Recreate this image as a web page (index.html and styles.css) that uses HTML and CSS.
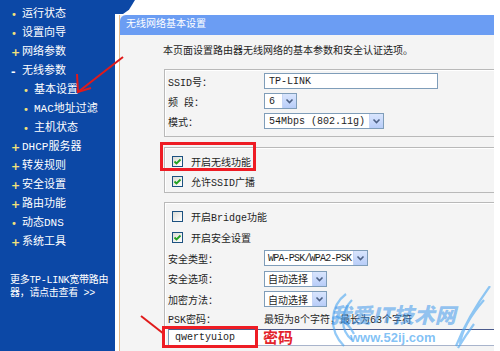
FILE: index.html
```html
<!DOCTYPE html>
<html lang="zh-CN">
<head>
<meta charset="utf-8">
<title>无线网络基本设置</title>
<link rel="stylesheet" href="styles.css">
</head>
<body>
<div class="page">
  <nav class="side">
    <ul class="menu">
      <li class="dot">运行状态</li>
      <li class="dot">设置向导</li>
      <li class="plus">网络参数</li>
      <li class="minus">无线参数</li>
      <li class="dot sub">基本设置</li>
      <li class="dot sub">MAC地址过滤</li>
      <li class="dot sub">主机状态</li>
      <li class="plus">DHCP服务器</li>
      <li class="plus">转发规则</li>
      <li class="plus">安全设置</li>
      <li class="plus">路由功能</li>
      <li class="dot">动态DNS</li>
      <li class="plus">系统工具</li>
    </ul>
    <p class="more">更多TP-LINK宽带路由<br>器，请点击查看 &gt;&gt;</p>
  </nav>
  <main class="main">
    <section class="panel">
      <h1 class="panel-title">无线网络基本设置</h1>
      <div class="panel-body">
        <p class="desc">本页面设置路由器无线网络的基本参数和安全认证选项。</p>

        <div class="group g1">
          <div class="row"><span class="lbl">SSID号：</span><span class="field ssid">TP-LINK</span></div>
          <div class="row"><span class="lbl">频&nbsp;段：</span><span class="field sel w-band"><span class="val">6</span><span class="btn"><svg viewBox="0 0 13 14" width="13" height="14"><path d="M3.5 5.5 L6.5 8.5 L9.5 5.5" fill="none" stroke="#4d6185" stroke-width="1.6"/></svg></span></span></div>
          <div class="row"><span class="lbl">模式：</span><span class="field sel w-mode"><span class="val">54Mbps (802.11g)</span><span class="btn"><svg viewBox="0 0 13 14" width="13" height="14"><path d="M3.5 5.5 L6.5 8.5 L9.5 5.5" fill="none" stroke="#4d6185" stroke-width="1.6"/></svg></span></span></div>
        </div>

        <div class="group g2">
          <div class="row chk"><span class="cb on"><svg viewBox="0 0 11 11" width="11" height="11"><path d="M2.5 5.5 L4.5 7.5 L8.5 3.5" fill="none" stroke="#21a121" stroke-width="1.8"/></svg></span>开启无线功能</div>
          <div class="row chk"><span class="cb on"><svg viewBox="0 0 11 11" width="11" height="11"><path d="M2.5 5.5 L4.5 7.5 L8.5 3.5" fill="none" stroke="#21a121" stroke-width="1.8"/></svg></span>允许SSID广播</div>
        </div>

        <div class="group g3">
          <div class="row chk r-bridge"><span class="cb"></span>开启Bridge功能</div>
          <div class="row chk r-sec"><span class="cb on"><svg viewBox="0 0 11 11" width="11" height="11"><path d="M2.5 5.5 L4.5 7.5 L8.5 3.5" fill="none" stroke="#21a121" stroke-width="1.8"/></svg></span>开启安全设置</div>
          <div class="row"><span class="lbl">安全类型：</span><span class="field sel w-type"><span class="val tight">WPA-PSK/WPA2-PSK</span><span class="btn"><svg viewBox="0 0 13 14" width="13" height="14"><path d="M3.5 5.5 L6.5 8.5 L9.5 5.5" fill="none" stroke="#4d6185" stroke-width="1.6"/></svg></span></span></div>
          <div class="row r-opt"><span class="lbl">安全选项：</span><span class="field sel w-auto"><span class="val cjk">自动选择</span><span class="btn"><svg viewBox="0 0 13 14" width="13" height="14"><path d="M3.5 5.5 L6.5 8.5 L9.5 5.5" fill="none" stroke="#4d6185" stroke-width="1.6"/></svg></span></span></div>
          <div class="row"><span class="lbl">加密方法：</span><span class="field sel w-auto"><span class="val cjk">自动选择</span><span class="btn"><svg viewBox="0 0 13 14" width="13" height="14"><path d="M3.5 5.5 L6.5 8.5 L9.5 5.5" fill="none" stroke="#4d6185" stroke-width="1.6"/></svg></span></span></div>
          <div class="row r-psk"><span class="lbl">PSK密码：</span><span class="hint">最短为8个字符，最长为63个字符</span></div>
          <div class="pwd">qwertyuiop</div>
        </div>
      </div>
    </section>
  </main>

  <svg class="arrows" viewBox="0 0 500 351" width="500" height="351">
    <path d="M123 57 L78 92" stroke="#e01a1a" stroke-width="2" fill="none"/>
    <path d="M77 74 L78 92 L91 88" stroke="#e01a1a" stroke-width="2" fill="none"/>
    <path d="M141 316 L164 334" stroke="#e01a1a" stroke-width="2" fill="none"/>
  </svg>
  <div class="redbox rb1"></div>
  <div class="redbox rb2"></div>
  <div class="note">密码</div>

  <div class="mark">
    <svg class="wings" viewBox="0 0 170 70" width="170" height="70">
      <path d="M22 8 C6 20 4 44 20 60 M28 14 C16 26 16 44 28 54 M12 30 C20 34 26 40 30 48" stroke="#4aa6f2" stroke-width="2.2" fill="none"/>
      <path d="M166 0 C150 22 140 40 132 60 M160 14 C146 30 138 44 136 58 M150 38 C144 46 140 52 134 62" stroke="#4aa6f2" stroke-width="2.2" fill="none"/>
    </svg>
    <div class="mark-t">我爱IT技术网</div>
    <div class="mark-u">www.52ij.com</div>
  </div>
</div>
</body>
</html>
```

FILE: styles.css
```css
html, body {
  margin: 0;
  padding: 0;
}
body {
  width: 500px;
  height: 351px;
  overflow: hidden;
  background: #ffffff;
  font-family: "Liberation Mono", "Noto Sans CJK SC", monospace;
  color: #1e1e1e;
}
.page {
  position: relative;
  display: flex;
  width: 500px;
  height: 351px;
}

/* sidebar */
.side {
  position: relative;
  width: 115px;
  flex: none;
  background: #0c48a6;
  color: #ffffff;
  font-size: 11px;
}
.side::after {
  content: "";
  position: absolute;
  left: 115px;
  top: 0;
  width: 20px;
  height: 14px;
  background: #0c48a6;
  clip-path: polygon(0 0, 100% 0, 70% 70%, 40% 100%, 0 100%);
}
.menu {
  list-style: none;
  margin: 0;
  padding: 5px 0 0 0;
}
.menu li {
  display: flex;
  height: 19px;
  line-height: 19px;
  padding-left: 11px;
  white-space: nowrap;
}
.menu li::before {
  content: "•";
  width: 11px;
  flex: none;
  color: #f3e27a;
  font-family: "DejaVu Sans", sans-serif;
  font-size: 10px;
}
.menu li.plus::before {
  content: "+";
  font-weight: bold;
  font-size: 11px;
}
.menu li.minus::before {
  content: "-";
  color: #ffffff;
  font-weight: bold;
  font-size: 11px;
}
.menu li.sub {
  padding-left: 23px;
}
.more {
  margin: 22px 0 0 10px;
  line-height: 13px;
  font-size: 10px;
  white-space: nowrap;
  letter-spacing: -0.3px;
}

/* main */
.main {
  flex: 1;
  display: flex;
  padding: 15px 6px 0 4px;
}
.panel {
  flex: 1;
  display: flex;
  flex-direction: column;
  border-left: 1px solid #e4bc8c;
  background: #f4f4f4;
}
.panel-title {
  margin: 0;
  height: 20px;
  line-height: 20px;
  padding-left: 6px;
  background: #6b9df3;
  color: #ffffff;
  font-size: 10px;
  font-weight: normal;
  border-top-left-radius: 6px;
}
.panel-body {
  flex: 1;
  padding-left: 44px;
  font-size: 10px;
}
.desc {
  margin: 11px 0 11px -1px;
  line-height: 12px;
  white-space: nowrap;
}

.group {
  border: 1px solid #b9b9b9;
  border-right: none;
  box-shadow: inset 1px 1px 0 #ffffff;
  padding-left: 3px;
}
.g1 {
  padding-top: 1px;
  padding-bottom: 5px;
}
.g2 {
  margin-top: 10px;
  padding-top: 3px;
  padding-bottom: 1px;
}
.g3 {
  margin-top: 9px;
  padding-top: 3px;
  border-bottom: none;
}
.row {
  display: flex;
  align-items: center;
  height: 20px;
  white-space: nowrap;
}
.r-bridge, .r-sec, .r-opt {
  height: 21px;
}
.r-psk {
  height: 19px;
}
.lbl {
  width: 96px;
  flex: none;
}
.field {
  box-sizing: border-box;
  height: 16px;
  border: 1px solid #7f9db9;
  background: #ffffff;
  display: flex;
  align-items: center;
  font-size: 10px;
}
.ssid {
  width: 174px;
  padding-left: 4px;
}
.sel .val {
  flex: 1;
  padding-left: 4px;
  overflow: hidden;
}
.sel .val.tight {
  padding-left: 3px;
  letter-spacing: -0.8px;
}
.sel .val.cjk {
  padding-left: 3px;
}
.btn {
  width: 13px;
  height: 14px;
  flex: none;
  background: linear-gradient(#d9e5fd, #b8cdf8);
  border-left: 1px solid #c6d5f5;
  display: flex;
}
.w-band { width: 33px; }
.w-mode { width: 120px; }
.w-type { width: 104px; }
.w-auto { width: 63px; }

.chk .cb {
  box-sizing: border-box;
  width: 11px;
  height: 11px;
  margin: 0 8px 0 4px;
  border: 1px solid #1c5180;
  background: linear-gradient(135deg, #dcdcd6, #ffffff);
  display: flex;
}
.chk .cb svg {
  margin: -1px;
}
.hint {
  color: #1e1e1e;
}
.pwd {
  box-sizing: border-box;
  height: 17px;
  margin-top: 1px;
  border-top: 1px solid #4a5a8c;
  border-left: 1px solid #7f9db9;
  border-bottom: 1px solid #a8b4cc;
  background: #ffffff;
  padding-left: 6px;
  line-height: 15px;
  font-size: 10px;
}

/* annotations over the screenshot */
.arrows {
  position: absolute;
  left: 0;
  top: 0;
  pointer-events: none;
}
.redbox {
  position: absolute;
  box-sizing: border-box;
  border: 3px solid #ee1c24;
}
.rb1 {
  left: 160px;
  top: 142px;
  width: 96px;
  height: 29px;
}
.rb2 {
  left: 162px;
  top: 326px;
  width: 96px;
  height: 22px;
}
.note {
  position: absolute;
  left: 263px;
  top: 328px;
  font-family: "Noto Sans CJK SC", sans-serif;
  font-size: 15px;
  line-height: 18px;
  font-weight: bold;
  color: #e3232a;
}
.mark {
  position: absolute;
  left: 324px;
  top: 286px;
  width: 172px;
  height: 64px;
  pointer-events: none;
}
.wings {
  position: absolute;
  left: 0;
  top: 0;
  opacity: 0.6;
}
.mark-t {
  position: absolute;
  left: 6px;
  top: 16px;
  font-family: "Noto Sans CJK SC", sans-serif;
  font-size: 21px;
  line-height: 24px;
  font-weight: 900;
  font-style: italic;
  color: rgba(60, 150, 235, 0.55);
  white-space: nowrap;
}
.mark-u {
  position: absolute;
  left: 26px;
  top: 44px;
  font-family: "Liberation Sans", sans-serif;
  font-size: 13px;
  line-height: 15px;
  font-weight: bold;
  color: rgba(60, 160, 240, 0.65);
  white-space: nowrap;
}
```
